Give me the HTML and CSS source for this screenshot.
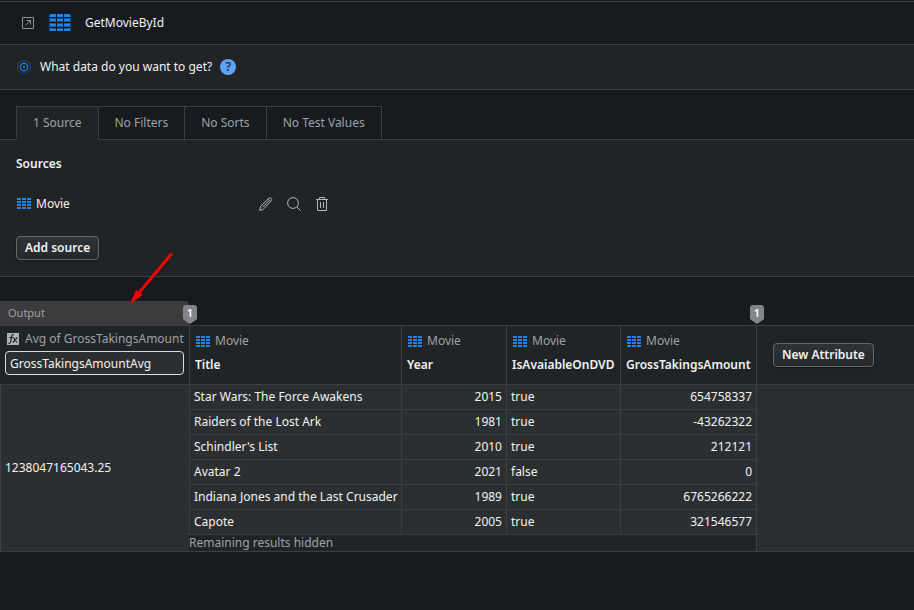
FILE: index.html
```html
<!DOCTYPE html>
<html lang="en">
<head>
<meta charset="utf-8">
<meta name="viewport" content="width=device-width, initial-scale=1">
<title>GetMovieById</title>
<link rel="stylesheet" href="styles.css">
</head>
<body>
<svg class="defs" aria-hidden="true">
  <symbol id="grid" viewBox="0 0 14 11">
    <path d="M0 0h4v2H0zM5 0h4v2H5zM10 0h4v2h-4zM0 3h4v2H0zM5 3h4v2H5zM10 3h4v2h-4zM0 6h4v2H0zM5 6h4v2H5zM10 6h4v2h-4zM0 9h4v2H0zM5 9h4v2H5zM10 9h4v2h-4z" fill="#1b84ee"/>
  </symbol>
</svg>

<header class="titlebar">
  <svg class="popout" width="12" height="12" viewBox="0 0 12 12" fill="none" stroke="#8f9295"><path d="M.5 .5h11v11H.5zM3.300 8.700l5-5M4.500 3.500h4v4"/></svg>
  <svg class="entity" width="22" height="18" viewBox="0 0 22 18"><path fill="#12559b" d="M0 1h22v16H0z"/><path fill="#171a1e" d="M7 0h1v18H7zM14 0h1v18h-1zM0 3h22v1H0zM0 8h22v1H0zM0 13h22v1H0z"/><path fill="#1b84ee" d="M1 0h6v3H1zM8 0h6v3H8zM15 0h6v3h-6zM1 5h6v2H1zM8 5h6v2H8zM15 5h6v2h-6zM1 10h6v2H1zM8 10h6v2H8zM15 10h6v2h-6zM1 15h6v2H1zM8 15h6v2H8zM15 15h6v2h-6z"/></svg>
  <h1>GetMovieById</h1>
</header>

<section class="question">
  <svg width="14" height="14" viewBox="0 0 14 14" fill="none"><circle cx="7" cy="7" r="6.500" stroke="#174b82"/><circle cx="7" cy="7" r="3.700" stroke="#1b84ee" stroke-width="1.200"/><circle cx="7" cy="7" r="1.100" fill="#1b84ee"/></svg>
  <h2>What data do you want to get?</h2>
  <button class="help" type="button" aria-label="Help">?</button>
</section>

<nav class="tabs">
  <button class="tab active" type="button">1 Source</button>
  <button class="tab" type="button">No Filters</button>
  <button class="tab" type="button">No Sorts</button>
  <button class="tab" type="button">No Test Values</button>
</nav>

<section class="sources">
  <h3>Sources</h3>
  <div class="source">
    <svg width="14" height="12"><use href="#grid" width="14" height="11"/></svg>
    <span class="name">Movie</span>
    <button class="icon" type="button" aria-label="Edit"><svg width="14" height="14" viewBox="0 0 14 14" fill="none" stroke="#b5b7b9"><path d="M.7 13.300l.8-3.800 8.400-8.300q1.100-.9 2.200.2t.3 2.200L4.100 12.500z M9 2.200l2.500 2.500M3.500 10.200l6.700-6.700"/></svg></button>
    <button class="icon" type="button" aria-label="View"><svg width="14" height="14" viewBox="0 0 14 14" fill="none" stroke="#b5b7b9"><circle cx="6" cy="6" r="5.400"/><path d="M10 10l3.600 3.600"/></svg></button>
    <button class="icon" type="button" aria-label="Delete"><svg width="12" height="14" viewBox="0 0 12 14" fill="none" stroke="#b5b7b9"><path d="M0 2.500h12M3.500 2.500v-2h5v2M1.500 2.500v11h9v-11M4.500 5v6M7.500 5v6"/></svg></button>
  </div>
  <button class="btn" type="button">Add source</button>
</section>

<main class="results">
  <table>
    <colgroup><col class="c-out"><col class="c-title"><col class="c-year"><col class="c-dvd"><col class="c-gross"><col></colgroup>
    <thead>
      <tr class="groups">
        <th class="output" scope="col">Output<span class="badge">1</span></th>
        <td class="blank" colspan="4"><span class="badge">1</span></td>
        <td class="blank"></td>
      </tr>
      <tr class="heads">
        <th class="agg">
          <label class="kind" for="alias"><svg width="12" height="12" viewBox="0 0 12 12" fill="none"><path fill="#b0b2b4" d="M0 0h12v12H0z"/><path stroke="#212427" stroke-width="1.200" d="M6.800 1.700Q5 .9 4.600 3.200L3.600 8.700Q3.200 10.800 1.400 10.200M2.200 4.500h4M6.300 4.500L10 9.500M10.500 4.500L5.800 9.500"/></svg>Avg of GrossTakingsAmount</label>
          <input id="alias" type="text" value="GrossTakingsAmountAvg">
        </th>
        <th scope="col"><span class="kind"><svg width="14" height="11"><use href="#grid"/></svg>Movie</span><span class="attr">Title</span></th>
        <th scope="col"><span class="kind"><svg width="14" height="11"><use href="#grid"/></svg>Movie</span><span class="attr">Year</span></th>
        <th scope="col"><span class="kind"><svg width="14" height="11"><use href="#grid"/></svg>Movie</span><span class="attr">IsAvaiableOnDVD</span></th>
        <th scope="col"><span class="kind"><svg width="14" height="11"><use href="#grid"/></svg>Movie</span><span class="attr">GrossTakingsAmount</span></th>
        <th class="add"><button class="btn" type="button">New Attribute</button></th>
      </tr>
    </thead>
    <tbody>
      <tr><td rowspan="7">1238047165043.25</td><td>Star Wars: The Force Awakens</td><td class="num">2015</td><td>true</td><td class="num">654758337</td><td rowspan="7"></td></tr>
      <tr><td>Raiders of the Lost Ark</td><td class="num">1981</td><td>true</td><td class="num">-43262322</td></tr>
      <tr><td>Schindler's List</td><td class="num">2010</td><td>true</td><td class="num">212121</td></tr>
      <tr><td>Avatar 2</td><td class="num">2021</td><td>false</td><td class="num">0</td></tr>
      <tr><td>Indiana Jones and the Last Crusader</td><td class="num">1989</td><td>true</td><td class="num">6765266222</td></tr>
      <tr><td>Capote</td><td class="num">2005</td><td>true</td><td class="num">321546577</td></tr>
      <tr class="more"><td colspan="4">Remaining results hidden</td></tr>
    </tbody>
  </table>
  <svg class="pointer" width="44" height="52" viewBox="0 0 44 52" aria-hidden="true"><path d="M41 2.500L10 39.500" stroke="#f00" stroke-width="2.800" stroke-linecap="round"/><path d="M0 52L6 38l3 2 3.500 3z" fill="#f00"/></svg>
</main>
</body>
</html>
```

FILE: styles.css
```css
:root {
  --dark: #171a1e;
  --panel: #212427;
  --cell: #2c2f31;
  --line: #3c3e40;
  --text: #f2f2f2;
  --muted: #a0a2a4;
}

* { box-sizing: border-box; }

body {
  margin: 0;
  background: var(--dark);
  color: var(--text);
  font: 12px/16px "Noto Sans", sans-serif;
}

h1, h2, h3 { margin: 0; font-size: inherit; font-weight: 400; }
svg { display: block; flex: none; }
button, input { font: inherit; color: inherit; }
.defs { position: absolute; width: 0; height: 0; }

.titlebar {
  display: flex;
  align-items: center;
  height: 44px;
  margin-top: 1px;
  padding: 0 22px;
  border-top: 1px solid var(--line);
  border-bottom: 1px solid var(--line);
}
.entity { margin: 0 14px 0 15px; }

.question {
  display: flex;
  align-items: center;
  gap: 8px;
  height: 45px;
  padding: 0 17px;
  background: var(--panel);
  border-bottom: 1px solid var(--line);
}
.question h2 { padding-left: 1px; }
.help {
  width: 16px;
  height: 16px;
  padding: 0;
  border: 0;
  border-radius: 50%;
  background: #60a3f5;
  color: #1c2c44;
  font-weight: 600;
  line-height: 16px;
}

.tabs {
  display: flex;
  height: 50px;
  padding: 16px 16px 0;
  border-bottom: 1px solid var(--line);
}
.tab {
  height: 34px;
  padding: 0 16px;
  border: 1px solid var(--line);
  border-left-width: 0;
  background: var(--dark);
  color: var(--muted);
}
.tab.active {
  border-left-width: 1px;
  border-bottom-color: var(--panel);
  background: var(--panel);
}

.sources {
  padding: 16px;
  background: var(--panel);
  border-bottom: 1px solid var(--line);
}
h3 { font-weight: 600; }
.source { display: flex; align-items: center; gap: 4px; margin: 16px 0; height: 32px; padding-left: 1px; }
.name { width: 215px; padding-left: 1px; }
.icon {
  display: grid;
  place-items: center;
  width: 24px;
  height: 24px;
  padding: 0;
  border: 0;
  background: none;
}
.btn {
  height: 24px;
  padding: 0 8px;
  border: 1px solid #65686b;
  border-radius: 4px;
  background: linear-gradient(#303336, #26292b);
  box-shadow: 0 1px 2px #0006;
  font-weight: 600;
  line-height: 16px;
}

.results { position: relative; margin-top: 24px; }
table { width: 100%; table-layout: fixed; border-collapse: separate; border-spacing: 0; }
.c-out { width: 189px; }
.c-title { width: 212px; }
.c-year { width: 105px; }
.c-dvd { width: 114px; }
.c-gross { width: 136px; }

th, td { padding: 0 4px; text-align: left; white-space: nowrap; }

.groups > * { position: relative; height: 25px; border-bottom: 1px solid var(--line); }
.groups .output {
  padding-left: 8px;
  border-radius: 0 4px 0 0;
  background: #3c3c3f;
  color: var(--muted);
  font-size: 11px;
  font-weight: 400;
}
.badge {
  position: absolute;
  z-index: 1;
  top: 4px;
  right: -8px;
  width: 14px;
  height: 19px;
  border-radius: 3px 3px 6px 6px;
  background: #838588;
  clip-path: polygon(0 0, 100% 0, 100% 75%, 50% 100%, 0 75%);
  color: #fff;
  font-size: 11px;
  font-weight: 600;
  line-height: 16px;
  text-align: center;
}

.heads th {
  height: 59px;
  padding: 7px 5px;
  border-left: 1px solid var(--line);
  border-bottom: 1px solid var(--line);
  background: var(--panel);
  font-weight: 600;
  vertical-align: top;
}
.heads .agg { padding: 5px; border-left: 0; }
.kind { display: flex; align-items: center; gap: 5px; padding-left: 1px; color: var(--muted); font-weight: 400; }
.agg .kind { padding-left: 2px; gap: 6px; }
.attr { display: block; margin-top: 8px; }
.heads .add { padding: 0 16px; vertical-align: middle; }
input {
  display: block;
  width: 100%;
  height: 24px;
  margin-top: 4px;
  padding: 0 4px;
  border: 1px solid #dcdcdc;
  border-radius: 4px;
  background: var(--cell);
  font-weight: 400;
}

tbody td {
  height: 25px;
  border-left: 1px solid var(--line);
  border-bottom: 1px solid var(--line);
  background: var(--cell);
}
.num { text-align: right; }
tbody .more td { height: 17px; padding: 0; border-left: 0; background: var(--panel); color: var(--muted); }

.pointer { position: absolute; z-index: 2; left: 130px; top: -49px; }
```
